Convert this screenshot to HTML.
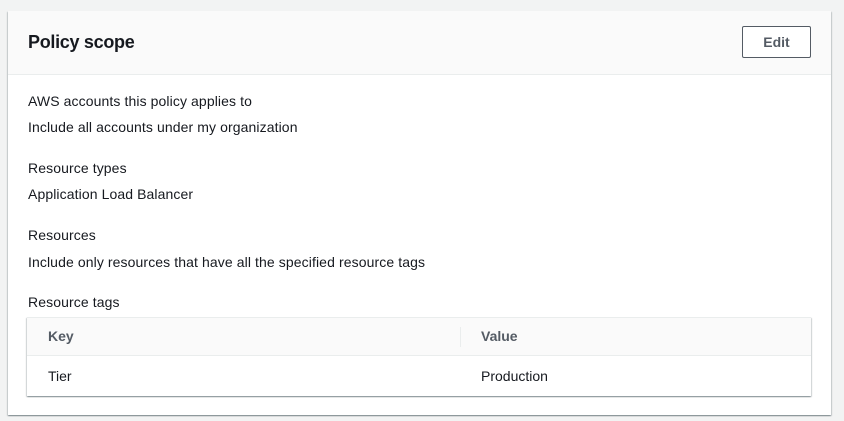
<!DOCTYPE html>
<html><head><style>
body{margin:0;width:844px;height:421px;background:#f2f3f3;font-family:"Liberation Sans",sans-serif;color:#16191f;font-size:14px;position:relative;overflow:hidden}
.card{position:absolute;left:8px;top:11px;width:823px;height:404px;background:#fff;box-shadow:0 1px 1px rgba(0,28,36,.3),1px 1px 1px rgba(0,28,36,.15),-1px 1px 1px rgba(0,28,36,.15)}
.hd{position:absolute;left:0;top:0;width:823px;height:63px;background:#fafafa;border-bottom:1px solid #eaeded}
.title{position:absolute;left:20px;top:20px;font-size:18px;font-weight:bold;line-height:22px;letter-spacing:-0.3px}
.btn{position:absolute;left:734px;top:15px;width:67px;height:30px;border:1px solid #545b64;border-radius:2px;background:#fff;font-weight:bold;color:#545b64;text-align:center;line-height:30px;font-size:14px}
.t{position:absolute;left:20px;line-height:18px;letter-spacing:0.1px}
.tbl{position:absolute;left:19px;top:306px;width:784px;height:78px;background:#fff;box-shadow:0 1px 1px rgba(0,28,36,.3),1px 1px 1px rgba(0,28,36,.15),-1px 1px 1px rgba(0,28,36,.15);border-top:1px solid #eaeded}
.th{position:absolute;left:0;top:0;width:784px;height:37px;background:#fafafa;border-bottom:1px solid #eaeded}
.c{position:absolute;line-height:18px}
</style></head><body>
<div class="card">
<div class="hd"><div class="title">Policy scope</div><div class="btn">Edit</div></div>
<div class="t" style="top:81px">AWS accounts this policy applies to</div>
<div class="t" style="top:107px">Include all accounts under my organization</div>
<div class="t" style="top:148px">Resource types</div>
<div class="t" style="top:174px">Application Load Balancer</div>
<div class="t" style="top:215px">Resources</div>
<div class="t" style="top:242px">Include only resources that have all the specified resource tags</div>
<div class="t" style="top:282px">Resource tags</div>
<div class="tbl">
<div class="th">
<div class="c" style="left:21px;top:9px;font-weight:bold;color:#545b64">Key</div>
<div style="position:absolute;left:433px;top:9px;width:1px;height:20px;background:#eaeded"></div>
<div class="c" style="left:454px;top:9px;font-weight:bold;color:#545b64">Value</div>
</div>
<div class="c" style="left:21px;top:49px">Tier</div>
<div class="c" style="left:454px;top:49px">Production</div>
</div>
</div>
</body></html>
